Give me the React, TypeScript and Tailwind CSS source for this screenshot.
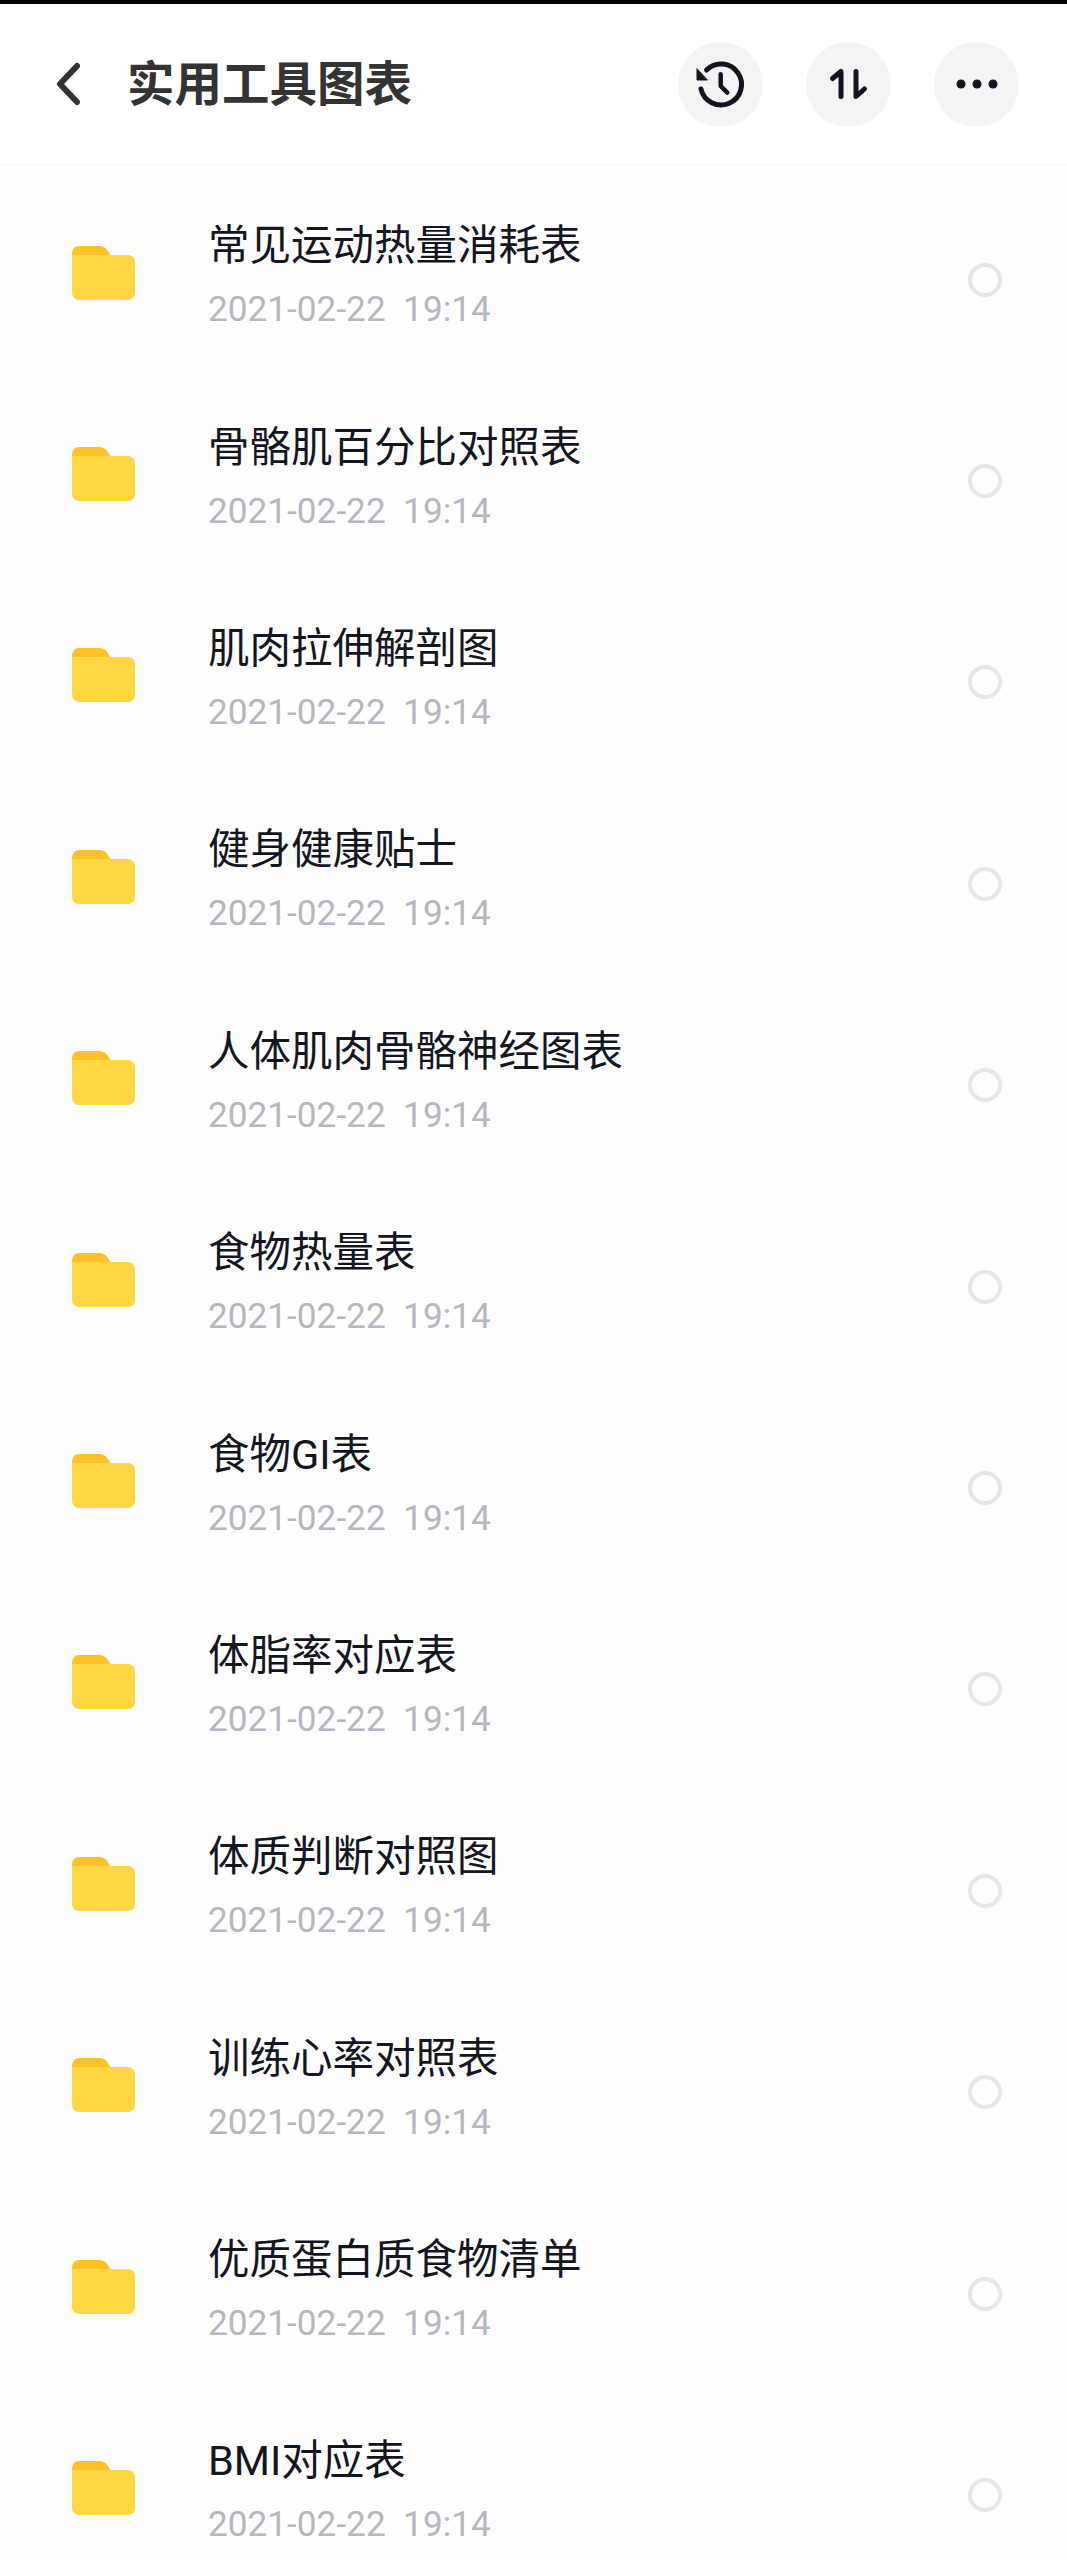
const files = [
  '常见运动热量消耗表',
  '骨骼肌百分比对照表',
  '肌肉拉伸解剖图',
  '健身健康贴士',
  '人体肌肉骨骼神经图表',
  '食物热量表',
  '食物GI表',
  '体脂率对应表',
  '体质判断对照图',
  '训练心率对照表',
  '优质蛋白质食物清单',
  'BMI对应表',
];

const FolderIcon = () => (
  <svg width="63" height="54" viewBox="0 0 63 54" className="-mt-[2px] shrink-0">
    <path d="M0 10V7a7 7 0 0 1 7-7h20c4 0 6.500 1.500 8.500 4.500L39 10z" fill="#ffc125" />
    <path d="M0 9h56a7 7 0 0 1 7 7v31a7 7 0 0 1-7 7H7a7 7 0 0 1-7-7z" fill="#ffd745" />
  </svg>
);

const HistoryIcon = () => (
  <svg width="52" height="52" viewBox="0 0 52 52" fill="none" stroke="#11131f" strokeLinecap="round" strokeLinejoin="round">
    <path d="M6 31A20.500 20.500 0 1 0 11.500 12" strokeWidth="5" />
    <path d="M2 11v11h10z" fill="#11131f" stroke="#11131f" strokeWidth="1" />
    <path d="M25.700 16.300V28l6.600 6.700" strokeWidth="4.500" />
  </svg>
);

const SortIcon = () => (
  <svg width="52" height="52" viewBox="0 0 52 52" fill="none" stroke="#11131f" strokeWidth="5" strokeLinecap="round" strokeLinejoin="round">
    <path d="M9.500 20.500L18 13.500V38.500" />
    <path d="M33 13.500V38.500L41.500 31" />
  </svg>
);

const MoreIcon = () => (
  <svg width="52" height="52" viewBox="0 0 52 52" fill="#11131f">
    <circle cx="10" cy="26" r="4.500" />
    <circle cx="26" cy="26" r="4.500" />
    <circle cx="42" cy="26" r="4.500" />
  </svg>
);

const IconButton = ({ children }: { children: React.ReactNode }) => (
  <div className="flex h-[85px] w-[85px] items-center justify-center rounded-full bg-[#f4f4f5]">{children}</div>
);

const App = () => {
  return (
    <div className="h-[2560px] w-[1067px] overflow-hidden bg-[#fefefe] font-['Roboto','Noto_Sans_CJK_SC',sans-serif]">
      <div className="h-1 bg-black"></div>

      <header className="flex h-[161px] items-center border-b border-[#f6f6f6] bg-white pl-[54px] pr-[48px]">
        <svg width="28" height="44" viewBox="0 0 28 44" fill="none" stroke="#333333" strokeWidth="6" strokeLinecap="round" strokeLinejoin="round" className="shrink-0">
          <path d="M23 4L6 22l17 18" />
        </svg>
        <h1 className="ml-[45px] mt-[3px] flex-1 text-[47.500px] font-bold leading-none text-[#333333]">实用工具图表</h1>
        <div className="flex gap-[43px]">
          <IconButton><HistoryIcon /></IconButton>
          <IconButton><SortIcon /></IconButton>
          <IconButton><MoreIcon /></IconButton>
        </div>
      </header>

      <ul className="pt-[8px]">
        {files.map((name) => (
          <li key={name} className="flex h-[201.4px] items-center pl-[72px] pr-[65px]">
            <FolderIcon />
            <div className="ml-[73px] mt-[4px] flex-1">
              <div className="text-[41.500px] leading-[56px] text-[#14161f]">{name}</div>
              <div className="mt-[11px] whitespace-pre text-[35.200px] leading-[48px] text-[#b4b7bf]">2021-02-22  19:14</div>
            </div>
            <div className="mt-[12px] h-[34px] w-[34px] rounded-full border-[4px] border-[#e5e6e9]"></div>
          </li>
        ))}
      </ul>
    </div>
  );
};

export default App;
